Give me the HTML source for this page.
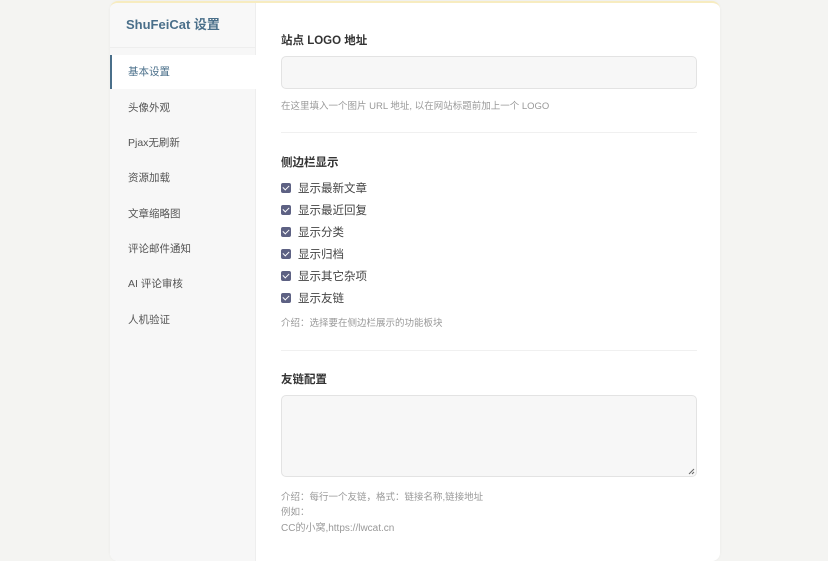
<!DOCTYPE html>
<html><head><meta charset="utf-8"><style>
*{margin:0;padding:0;box-sizing:border-box}
body{width:828px;height:536px;overflow:hidden;background:#f4f4f2;font-family:"Liberation Sans","Noto Sans CJK SC",sans-serif;position:relative}
.card{position:absolute;left:110px;top:1px;width:610px;height:560px;background:#fff;border-radius:8px;border-top:2px solid #f7ecc0;overflow:hidden;box-shadow:0 0 3px rgba(0,0,0,.04)}
.side{position:absolute;left:0;top:0;width:146px;height:100%;background:#f7f7f7;border-right:1px solid #eee}
.hd{height:45px;line-height:44px;padding-left:16px;font-size:13px;font-weight:bold;color:#4a6f8a;border-bottom:1px solid #eee;background:#f8f8f8}
.it{position:absolute;left:0;width:146px;height:34px;line-height:34px;padding-left:18px;font-size:10.5px;color:#555}
.it.a{background:#fff;border-left:2px solid #4a6f8a;padding-left:16px;color:#4a6f8a}
.t{position:absolute;left:171px;font-size:11.5px;font-weight:bold;color:#333}
.inp{position:absolute;left:171px;width:416px;background:#f7f7f7;border:1px solid #e3e3e3;border-radius:5px}
.h{position:absolute;left:171px;font-size:9.5px;color:#999}
.hr{position:absolute;left:171px;width:416px;border-top:1px solid #f0f0f0}
.cb{position:absolute;left:171px;font-size:11.5px;color:#444;line-height:14px}
.cb i{display:inline-block;width:10px;height:10px;background:#5d6183;border-radius:2px;vertical-align:-1px;margin-right:7px;position:relative}
.cb i:after{content:"";position:absolute;left:3px;top:1px;width:3px;height:5px;border:solid #fff;border-width:0 1.3px 1.3px 0;transform:rotate(45deg)}
</style></head><body>
<div class="card">
<div class="side">
<div class="hd">ShuFeiCat 设置</div>
<div class="it a" style="top:52px">基本设置</div>
<div class="it" style="top:88px">头像外观</div>
<div class="it" style="top:123px">Pjax无刷新</div>
<div class="it" style="top:158px">资源加载</div>
<div class="it" style="top:194px">文章缩略图</div>
<div class="it" style="top:229px">评论邮件通知</div>
<div class="it" style="top:264px">AI 评论审核</div>
<div class="it" style="top:300px">人机验证</div>
</div>
<div class="t" style="top:29px">站点 LOGO 地址</div>
<div class="inp" style="top:53px;height:33px"></div>
<div class="h" style="top:95px">在这里填入一个图片 URL 地址, 以在网站标题前加上一个 LOGO</div>
<div class="hr" style="top:129px"></div>
<div class="t" style="top:151px">侧边栏显示</div>
<div class="cb" style="top:179px"><i></i>显示最新文章</div>
<div class="cb" style="top:201px"><i></i>显示最近回复</div>
<div class="cb" style="top:223px"><i></i>显示分类</div>
<div class="cb" style="top:245px"><i></i>显示归档</div>
<div class="cb" style="top:267px"><i></i>显示其它杂项</div>
<div class="cb" style="top:289px"><i></i>显示友链</div>
<div class="h" style="top:312px">介绍：选择要在侧边栏展示的功能板块</div>
<div class="hr" style="top:347px"></div>
<div class="t" style="top:368px">友链配置</div>
<div class="inp" style="top:392px;height:82px"><svg style="position:absolute;right:1px;bottom:1px" width="7" height="7"><path d="M1 6L6 1M4 6L6 4" stroke="#666" stroke-width="1"/></svg></div>
<div class="h" style="top:486px">介绍：每行一个友链，格式：链接名称,链接地址</div>
<div class="h" style="top:501px">例如：</div>
<div class="h" style="top:516px;font-size:10px">CC的小窝,https://lwcat.cn</div>
</div>
</body></html>
